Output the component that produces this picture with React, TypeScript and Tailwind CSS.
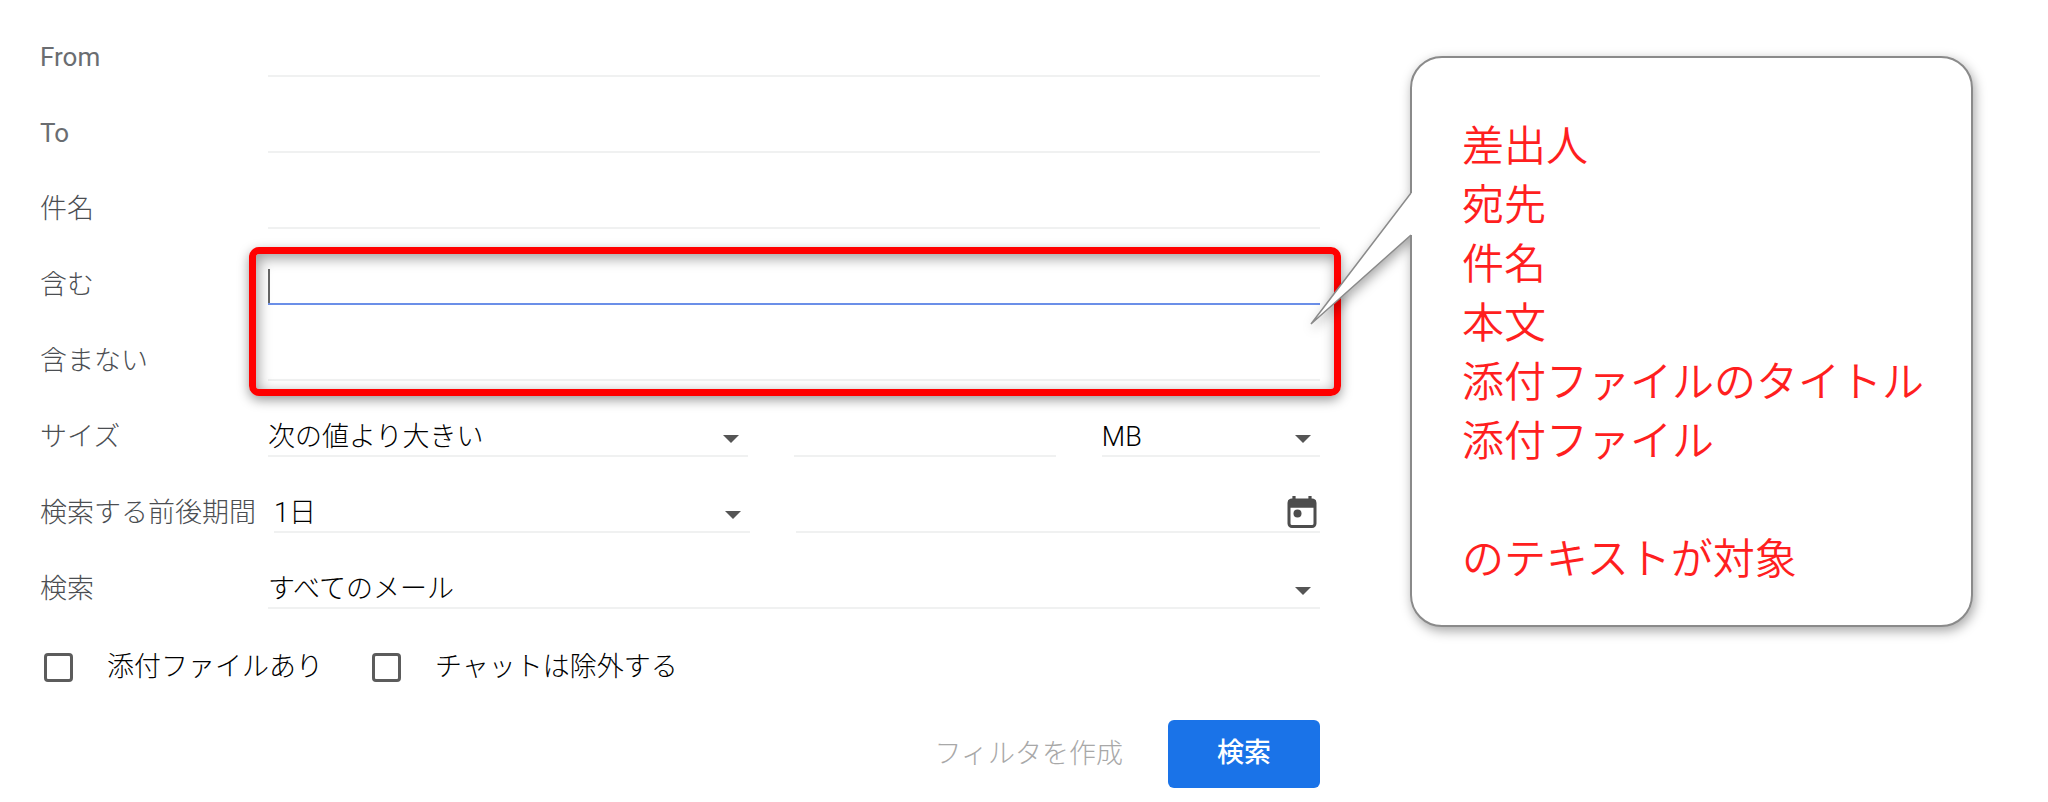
import { useId, useState } from 'react';
import type { ReactNode } from 'react';
import clsx from 'clsx';

const calloutLines = ['差出人', '宛先', '件名', '本文', '添付ファイルのタイトル', '添付ファイル', '', 'のテキストが対象'];

interface RowProps {
  label: string;
  htmlFor: string;
  latin?: boolean;
  children: ReactNode;
}

function Row({ label, htmlFor, latin, children }: RowProps) {
  return (
    <div className="flex h-19 items-end">
      <label
        htmlFor={htmlFor}
        className={clsx(
          'min-w-[228px] shrink-0 pr-[18px] pb-0.5 whitespace-nowrap',
          latin ? 'text-[26px] font-normal text-[#6a6d71]' : 'text-[#4b4e52]'
        )}
      >
        {label}
      </label>
      <div className="min-w-0 flex-1">{children}</div>
    </div>
  );
}

interface TextFieldProps {
  id?: string;
  ariaLabel?: string;
  active?: boolean;
}

function TextField({ id, ariaLabel, active }: TextFieldProps) {
  const [value, setValue] = useState('');

  return (
    <div className="relative">
      <input
        id={id}
        type="text"
        aria-label={ariaLabel}
        value={value}
        onChange={(e) => setValue(e.target.value)}
        className={clsx(
          'block h-[38px] w-full border-b-2 bg-transparent outline-none',
          active ? 'border-[#6b8fe8]' : 'border-[#f0f1f1]'
        )}
      />
      {active && !value && <span className="pointer-events-none absolute top-0.5 left-0 h-[34px] w-0.5 bg-[#666]" />}
    </div>
  );
}

interface SelectFieldProps {
  id?: string;
  ariaLabel?: string;
  options: string[];
}

function SelectField({ id, ariaLabel, options }: SelectFieldProps) {
  return (
    <div className="relative">
      <select
        id={id}
        aria-label={ariaLabel}
        className="block h-[38px] w-full appearance-none border-b-2 border-[#f0f1f1] bg-transparent pr-8 text-black outline-none"
      >
        {options.map((option) => (
          <option key={option}>{option}</option>
        ))}
      </select>
      <svg viewBox="0 0 16 8" className="pointer-events-none absolute top-4 right-[9px] h-2 w-4 fill-[#555]">
        <path d="M0 0h16L8 8z" />
      </svg>
    </div>
  );
}

function CheckField({ label }: { label: string }) {
  const id = useId();

  return (
    <div className="flex items-center">
      <input
        id={id}
        type="checkbox"
        className="size-[29px] appearance-none rounded-sm border-3 border-[#5c5c5c] checked:bg-[#5c5c5c]"
      />
      <label htmlFor={id} className="pl-[34px] text-black">
        {label}
      </label>
    </div>
  );
}

function CalendarIcon() {
  return (
    <svg viewBox="0 0 30 34" className="h-[34px] w-[30px]" fill="none" stroke="#4d4d4d">
      <rect x="2" y="5" width="26" height="26.5" rx="3" strokeWidth="3" />
      <path d="M2 5.5h26v6.5H2z" fill="#4d4d4d" strokeWidth="1.5" strokeLinejoin="round" />
      <path d="M7 1v4M23 1v4" strokeWidth="3.2" />
      <circle cx="10.5" cy="18.5" r="4" fill="#4d4d4d" stroke="none" />
    </svg>
  );
}

function Callout() {
  return (
    <aside className="relative mt-[55px] w-[563px] shrink-0 self-start drop-shadow-[2px_4px_6px_rgba(0,0,0,0.35)]">
      <div className="rounded-[32px] border-2 border-[#8a8a8a] bg-white pt-[59px] pr-8 pb-[36px] pl-[50px] text-[42px] leading-[59px] font-[350] text-[#ff1f1f]">
        {calloutLines.map((line, i) => (
          <p key={i} className="h-[59px] whitespace-nowrap">
            {line}
          </p>
        ))}
      </div>
      {/* tail, laid over the left border */}
      <svg viewBox="0 0 104 134" className="absolute top-[137px] -left-[100px] h-[134px] w-[104px]">
        <path d="M104 0H101L1 131L101 42H104z" fill="#fff" />
        <path d="M101 0L1 131L101 42" fill="none" stroke="#8a8a8a" strokeWidth="1.5" />
      </svg>
    </aside>
  );
}

export default function App() {
  return (
    <div className="flex gap-[90px] bg-white pt-px pr-[75px] pb-3.5 pl-10 font-['Roboto','Noto_Sans_CJK_JP',sans-serif] text-[27px] leading-9 font-light">
      <form className="min-w-0 flex-1" onSubmit={(e) => e.preventDefault()}>
        <Row label="From" htmlFor="from" latin>
          <TextField id="from" />
        </Row>
        <Row label="To" htmlFor="to" latin>
          <TextField id="to" />
        </Row>
        <Row label="件名" htmlFor="subject">
          <TextField id="subject" />
        </Row>

        <div className="relative">
          <Row label="含む" htmlFor="has">
            <TextField id="has" active />
          </Row>
          <Row label="含まない" htmlFor="hasnot">
            <TextField id="hasnot" />
          </Row>
          <div className="pointer-events-none absolute top-[18px] -right-[21px] -bottom-[15px] left-[209px] rounded-[10px] border-7 border-[#f00] shadow-[0_4px_12px_rgba(0,0,0,0.4),inset_2px_4px_14px_rgba(0,0,0,0.4)]" />
        </div>

        <Row label="サイズ" htmlFor="size">
          <div className="grid grid-cols-[11fr_6fr_5fr] gap-[46px]">
            <SelectField id="size" options={['次の値より大きい', '次の値より小さい']} />
            <TextField ariaLabel="サイズの値" />
            <SelectField ariaLabel="単位" options={['MB', 'KB', 'バイト']} />
          </div>
        </Row>
        <Row label="検索する前後期間" htmlFor="within">
          <div className="grid grid-cols-[10fr_11fr] gap-[46px]">
            <SelectField id="within" options={['1日', '3日', '1週間', '2週間', '1か月']} />
            <div className="relative">
              <TextField ariaLabel="日付" />
              <button type="button" aria-label="カレンダー" className="absolute right-[3px] bottom-1">
                <CalendarIcon />
              </button>
            </div>
          </div>
        </Row>
        <Row label="検索" htmlFor="scope">
          <SelectField id="scope" options={['すべてのメール', '受信トレイ', '送信済みメール']} />
        </Row>

        <div className="mt-10 flex gap-[49px] pl-1">
          <CheckField label="添付ファイルあり" />
          <CheckField label="チャットは除外する" />
        </div>

        <div className="mt-[35px] flex items-center justify-end gap-[45px]">
          <button type="button" className="text-[#a8a8a8]">
            フィルタを作成
          </button>
          <button type="submit" className="h-17 w-[152px] rounded-md bg-[#1a73e8] pb-0.5 font-medium text-white">
            検索
          </button>
        </div>
      </form>

      <Callout />
    </div>
  );
}
